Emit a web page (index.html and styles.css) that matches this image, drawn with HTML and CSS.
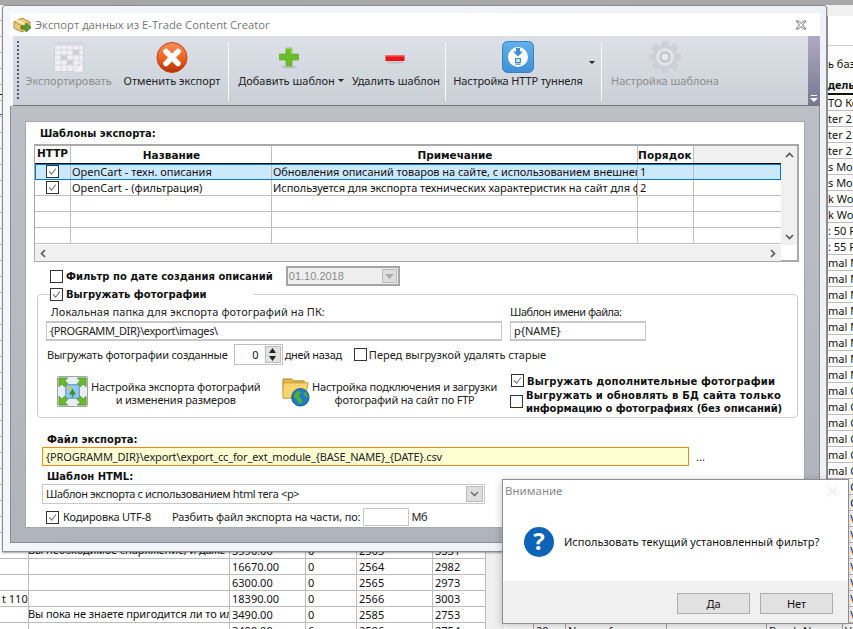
FILE: index.html
```html
<!DOCTYPE html>
<html lang="ru">
<head>
<meta charset="utf-8">
<title>Экспорт данных</title>
<link rel="stylesheet" href="styles.css">
</head>
<body>
<svg class="defs" width="0" height="0" aria-hidden="true">
  <symbol id="check" viewBox="0 0 13 13"><path d="M2.5 6.5l3 3.2 5-6.7" fill="none" stroke="#777" stroke-width="1.3"/></symbol>
  <symbol id="chev" viewBox="0 0 9 6"><path d="M1 1l3.5 3.5L8 1" fill="none" stroke="#666" stroke-width="1.4"/></symbol>
</svg>

<div class="desk-top"></div>

<section class="sheet-left">
  <div class="lrow"><span class="c1"></span><span class="c2">Вы необходимое снаряжение, и даже</span><span class="c3">3590.00</span><span class="c4">0</span><span class="c5">2563</span><span class="c6">3331</span></div>
  <div class="lrow"><span class="c1"></span><span class="c2"></span><span class="c3">16670.00</span><span class="c4">0</span><span class="c5">2564</span><span class="c6">2982</span></div>
  <div class="lrow"><span class="c1"></span><span class="c2"></span><span class="c3">6300.00</span><span class="c4">0</span><span class="c5">2565</span><span class="c6">2973</span></div>
  <div class="lrow"><span class="c1">t 110</span><span class="c2"></span><span class="c3">18390.00</span><span class="c4">0</span><span class="c5">2566</span><span class="c6">3003</span></div>
  <div class="lrow"><span class="c1"></span><span class="c2">Вы пока не знаете пригодится ли то или иное</span><span class="c3">3490.00</span><span class="c4">0</span><span class="c5">2585</span><span class="c6">2753</span></div>
  <div class="lrow"><span class="c1"></span><span class="c2"></span><span class="c3">3490.00</span><span class="c4">6</span><span class="c5">2586</span><span class="c6">2754</span></div>
</section>

<section class="sheet-right">
  <div class="rhead r1"></div>
  <div class="rhead r2">ь баз</div>
  <div class="rhead r3">дель</div>
  <div class="rrow">ТО Ко</div><div class="rrow">ter 2</div><div class="rrow">ter 2</div><div class="rrow">ter 2</div>
  <div class="rrow">s Mor</div><div class="rrow">s Mor</div><div class="rrow">k Wol</div><div class="rrow">k Wol</div>
  <div class="rrow">: 50 P</div><div class="rrow">: 55 P</div>
  <div class="rrow">mal M</div><div class="rrow">mal M</div><div class="rrow">mal M</div><div class="rrow">mal M</div>
  <div class="rrow">mal M</div><div class="rrow">mal M</div><div class="rrow">mal M</div><div class="rrow">mal M</div>
  <div class="rrow">mal C</div><div class="rrow">mal C</div><div class="rrow">mal C</div><div class="rrow">mal C</div>
  <div class="rrow">mal C</div><div class="rrow">mal C</div><div class="rrow">mal C</div><div class="rrow">mal C</div>
  <div class="rrow">mal V</div><div class="rrow">mal V</div><div class="rrow">mal V</div><div class="rrow">mal V</div>
  <div class="rrow">mal V</div><div class="rrow">mal V</div><div class="rrow">mal V</div>
</section>

<section class="sheet-under">
  <span class="u1"></span><span class="u2">20</span><span class="u3">Name of</span><span class="u4"></span><span class="u5">Bosch Name</span><span class="u6">V</span>
</section>

<main class="window">
  <header class="titlebar">
    <svg class="appicon" width="18" height="18" viewBox="0 0 18 18">
      <path d="M1 6l8-4 8 4v6l-8 4-8-4z" fill="#f0c878" stroke="#b08a3c"/>
      <path d="M1 6l8 4 8-4M9 10v6" fill="none" stroke="#c8a050"/>
      <path d="M3 3.800l8 4" stroke="#fff0c8" stroke-width="2"/>
      <path d="M8 10h5V7l5 4.500-5 4.500v-3H8z" fill="#5aa02c" stroke="#2f7a1c" stroke-width=".8"/>
    </svg>
    <span class="titletext">Экспорт данных из E-Trade Content Creator</span>
    <svg class="closex" width="12" height="10" viewBox="0 0 12 10"><path d="M1 1h2.500L6 3.500 8.500 1H11L7.500 5 11 9H8.500L6 6.500 3.500 9H1l3.500-4z" fill="#fff" stroke="#707070"/></svg>
  </header>

  <nav class="toolbar">
    <div class="grip"></div>
    <div class="tool t1 off">
      <svg class="ticon" width="32" height="32" viewBox="0 0 32 32">
        <rect x="1.500" y="1.500" width="29" height="29" rx="1" fill="#f1f1f5" stroke="#d0d0d9"/>
        <rect x="2" y="2" width="28" height="3" fill="#d9d9e1"/>
        <path d="M2 9h28M2 14h28M2 19h28M2 24h28M8 5v25M14 5v25M20 5v25M26 5v25" stroke="#d6d6de" fill="none"/>
        <rect x="20" y="9" width="6" height="5" fill="#cfcfd8"/><rect x="8" y="14" width="6" height="5" fill="#cfcfd8"/><rect x="14" y="19" width="6" height="5" fill="#cfcfd8"/>
        <path d="M20 31l10-10v10z" fill="#f6f6f8" stroke="#d4d4db"/>
      </svg>
      <span class="tlabel">Экспортировать</span>
    </div>
    <div class="tool t2">
      <svg class="ticon" width="32" height="32" viewBox="0 0 32 32">
        <defs><linearGradient id="og" x1="0" y1="0" x2="0" y2="1"><stop offset="0" stop-color="#f8925a"/><stop offset=".55" stop-color="#ee5f1c"/><stop offset="1" stop-color="#b42c08"/></linearGradient></defs>
        <circle cx="16" cy="16.500" r="15" fill="url(#og)" stroke="#c24212"/>
        <path d="M10 10.500l12 12M22 10.500l-12 12" stroke="#fff" stroke-width="5.500" stroke-linecap="round"/>
      </svg>
      <span class="tlabel">Отменить экспорт</span>
    </div>
    <div class="tsep"></div>
    <div class="tool t3">
      <svg class="ticon" width="32" height="32" viewBox="0 0 32 32">
        <ellipse cx="16" cy="26" rx="8" ry="1.300" fill="#b9bcc2"/>
        <path d="M13 7h6v6h6.500v6H19v6h-6v-6H6.500v-6H13z" fill="#6cbc2a" stroke="#5aa51e" stroke-width=".6"/>
        <path d="M13.500 7.500h5v6" fill="none" stroke="#9ede5c"/>
      </svg>
      <span class="tlabel">Добавить шаблон<i class="caret"></i></span>
    </div>
    <div class="tool t4">
      <svg class="ticon" width="32" height="32" viewBox="0 0 32 32">
        <ellipse cx="16" cy="21.500" rx="9" ry="1" fill="#bfc2c8"/>
        <rect x="6.500" y="14" width="19" height="6" rx=".5" fill="#e81416"/>
        <rect x="7" y="14" width="18" height="1.500" fill="#f76a6a"/>
      </svg>
      <span class="tlabel">Удалить шаблон</span>
    </div>
    <div class="tsep s2"></div>
    <div class="tool t5">
      <svg class="ticon" width="32" height="32" viewBox="0 0 32 32">
        <defs><linearGradient id="bg" x1="0" y1="0" x2="0" y2="1"><stop offset="0" stop-color="#5fb2ea"/><stop offset="1" stop-color="#3f8fd6"/></linearGradient></defs>
        <rect x=".5" y=".5" width="31" height="31" rx="5" fill="url(#bg)" stroke="#3a7fc0"/>
        <circle cx="16" cy="16" r="10" fill="#fff"/>
        <path d="M14 7h4v3.500h3l-5 5-5-5h3z" fill="#3f8fd6"/>
        <rect x="13" y="17" width="6" height="5" fill="#3f8fd6"/><rect x="14.200" y="18.200" width="3.600" height="2.600" fill="#dff0fb"/>
        <rect x="13.500" y="22.500" width="5" height="1.300" fill="#3f8fd6"/>
      </svg>
      <span class="tlabel">Настройка HTTP туннеля</span>
      <i class="caret far"></i>
    </div>
    <div class="tsep s3"></div>
    <div class="tool t6 off">
      <svg class="ticon" width="32" height="32" viewBox="0 0 32 32">
        <g fill="#cfcfda">
          <rect x="12.500" y="0" width="7" height="6"/>
          <rect x="12.500" y="0" width="7" height="6" transform="rotate(45 16 16)"/>
          <rect x="12.500" y="0" width="7" height="6" transform="rotate(90 16 16)"/>
          <rect x="12.500" y="0" width="7" height="6" transform="rotate(135 16 16)"/>
          <rect x="12.500" y="0" width="7" height="6" transform="rotate(180 16 16)"/>
          <rect x="12.500" y="0" width="7" height="6" transform="rotate(225 16 16)"/>
          <rect x="12.500" y="0" width="7" height="6" transform="rotate(270 16 16)"/>
          <rect x="12.500" y="0" width="7" height="6" transform="rotate(315 16 16)"/>
          <circle cx="16" cy="16" r="12.500"/>
        </g>
        <circle cx="16" cy="16" r="9" fill="#e2e2e9"/>
        <circle cx="16" cy="16" r="4.500" fill="#e9e9ee" stroke="#bdbdca" stroke-width="2"/>
      </svg>
      <span class="tlabel">Настройка шаблона</span>
    </div>
    <div class="overflow">
      <svg width="8" height="7" viewBox="0 0 8 7"><path d="M1 .5h6" stroke="#fff"/><path d="M0 3h8L4 7z" fill="#fff"/></svg>
    </div>
  </nav>

  <div class="stage">
    <div class="panel">
      <div class="blabel head">Шаблоны экспорта:</div>

      <div class="gridbox">
        <div class="gridtop">
          <div class="gridmain">
            <div class="grow ghead">
              <span class="g1 th up">HTTP</span><span class="g2 th ctr">Название</span><span class="g3 th ctr">Примечание</span><span class="g4 th">Порядок</span><span class="g5 blank"></span>
            </div>
            <div class="grow sel">
              <span class="g1"><span class="cb"><svg><use href="#check"/></svg></span></span><span class="g2">OpenCart - техн. описания</span><span class="g3">Обновления описаний товаров на сайте, с использованием внешнего модуля</span><span class="g4">1</span><span class="g5"></span>
            </div>
            <div class="grow">
              <span class="g1"><span class="cb"><svg><use href="#check"/></svg></span></span><span class="g2">OpenCart - (фильтрация)</span><span class="g3">Используется для экспорта технических характеристик на сайт для фильтрации</span><span class="g4">2</span><span class="g5"></span>
            </div>
            <div class="grow"><span class="g1"></span><span class="g2"></span><span class="g3"></span><span class="g4"></span><span class="g5"></span></div>
            <div class="grow"><span class="g1"></span><span class="g2"></span><span class="g3"></span><span class="g4"></span><span class="g5"></span></div>
            <div class="grow"><span class="g1"></span><span class="g2"></span><span class="g3"></span><span class="g4"></span><span class="g5"></span></div>
          </div>
          <div class="vscroll">
            <svg width="9" height="6" viewBox="0 0 9 6"><path d="M1 5l3.500-3.500L8 5" fill="none" stroke="#555" stroke-width="1.600"/></svg>
            <svg width="9" height="6" viewBox="0 0 9 6"><path d="M1 1l3.500 3.500L8 1" fill="none" stroke="#555" stroke-width="1.600"/></svg>
          </div>
        </div>
        <div class="hscroll">
          <svg width="6" height="9" viewBox="0 0 6 9"><path d="M5 1L1.500 4.500 5 8" fill="none" stroke="#555" stroke-width="1.600"/></svg>
          <svg width="6" height="9" viewBox="0 0 6 9"><path d="M1 1l3.500 3.500L1 8" fill="none" stroke="#555" stroke-width="1.600"/></svg>
        </div>
      </div>

      <div class="filter">
        <span class="cb"></span>
        <span class="blabel">Фильтр по дате создания описаний</span>
        <div class="datebox"><span>01.10.2018</span><span class="datebtn"><svg width="9" height="5" viewBox="0 0 9 5"><path d="M0 0h9L4.500 5z" fill="#aaa"/></svg></span></div>
      </div>

      <fieldset class="group">
        <legend class="legend"><span class="cb"><svg><use href="#check"/></svg></span><span class="blabel">Выгружать фотографии</span></legend>
        <div class="pathrow">
          <div class="field wide">
            <label class="lbl loose">Локальная папка для экспорта фотографий на ПК:</label>
            <div class="input pathtext">{PROGRAMM_DIR}\export\images\</div>
          </div>
          <div class="field name">
            <label class="lbl tight">Шаблон имени файла:</label>
            <div class="input">p{NAME}</div>
          </div>
        </div>
        <div class="spinrow">
          <span class="lbl snug">Выгружать фотографии созданные</span>
          <div class="spin"><span class="spinval">0</span><span class="spinbtns"><svg width="7" height="5" viewBox="0 0 7 5"><path d="M3.500 0L7 5H0z" fill="#222"/></svg><svg width="7" height="5" viewBox="0 0 7 5"><path d="M0 0h7L3.500 5z" fill="#222"/></svg></span></div>
          <span class="lbl days">дней назад</span>
          <span class="cb old"></span>
          <span class="lbl">Перед выгрузкой удалять старые</span>
        </div>
        <div class="actions">
          <div class="action a1">
            <svg width="31" height="31" viewBox="0 0 32 32">
              <rect x=".5" y=".5" width="31" height="31" rx="1.500" fill="#e9eef2" stroke="#9aa0a6"/>
              <rect x="9" y="9" width="14" height="14" fill="#8fc8ee" stroke="#5a90c0"/>
              <circle cx="12.500" cy="12.500" r="1.800" fill="#f4c020"/>
              <path d="M16 13l3.500 6h-7zM15.200 19h1.600v3h-1.600z" fill="#3e8a2c"/>
              <path d="M2 2h9l-2.800 2.800 3 3-3.400 3.400-3-3L2 11zM30 2h-9l2.800 2.800-3 3 3.400 3.400 3-3L30 11zM2 30h9l-2.800-2.800 3-3-3.400-3.400-3 3L2 21zM30 30h-9l2.800-2.800-3-3 3.400-3.400 3 3L30 21z" fill="#6cb82c" stroke="#3f8a18" stroke-width=".7"/>
            </svg>
            <span class="actiontext">Настройка экспорта фотографий<br>и изменения размеров</span>
          </div>
          <div class="action a2">
            <svg width="29" height="31" viewBox="0 0 30 32">
              <path d="M1 3h9l2 2h11v8H1z" fill="#e8b84a" stroke="#b48a28"/>
              <path d="M1 9l2-2h24l-3 16H1z" fill="#f7d470" stroke="#c09a38"/>
              <circle cx="19" cy="22" r="9" fill="#1f78c8" stroke="#145a9c"/>
              <path d="M13 18c3-3 5-3 6-1s-2 3-1 5 3 1 3 4-3 3-4 2-1-4-3-5-2-3-1-5zM23 16c2 1 4 4 4 6-2 0-3-1-4-2s-1-3 0-4z" fill="#4cb034"/>
            </svg>
            <span class="actiontext">Настройка подключения и загрузки<br>фотографий на сайт по FTP</span>
          </div>
          <div class="optcol">
            <div class="opt o1"><span class="cb"><svg><use href="#check"/></svg></span><span class="blabel">Выгружать дополнительные фотографии</span></div>
            <div class="opt o2"><span class="cb"></span><span class="blabel"><span class="l1">Выгружать и обновлять в БД сайта только</span><br><span class="l2">информацию о фотографиях (без описаний)</span></span></div>
          </div>
        </div>
      </fieldset>

      <div class="filesec">
        <div class="blabel sub">Файл экспорта:</div>
        <div class="filerow"><div class="input hot">{PROGRAMM_DIR}\export\export_cc_for_ext_module_{BASE_NAME}_{DATE}.csv</div><span class="dots">...</span></div>
        <div class="blabel sub s2nd">Шаблон HTML:</div>
        <div class="select"><span>Шаблон экспорта с использованием html тега &lt;p&gt;</span><span class="selbtn"><svg width="9" height="6"><use href="#chev"/></svg></span></div>
        <div class="lastrow">
          <span class="cb"><svg><use href="#check"/></svg></span>
          <span class="lbl utf">Кодировка UTF-8</span>
          <span class="lbl split">Разбить файл экспорта на части, по:</span>
          <div class="input tiny"></div>
          <span class="lbl mb">Мб</span>
        </div>
      </div>
    </div>
  </div>
</main>

<aside class="dialog">
  <header class="dlgtitle"><span>Внимание</span>
    <svg width="11" height="11" viewBox="0 0 11 11"><path d="M.5.500l10 10M10.500.500l-10 10" stroke="#e4e4e4"/></svg>
  </header>
  <div class="dlgbody">
    <svg width="30" height="30" viewBox="0 0 30 30"><circle cx="15" cy="15" r="15" fill="#0b64b8"/><text x="15" y="23" text-anchor="middle" class="qmark">?</text></svg>
    <span class="dlgtext">Использовать текущий установленный фильтр?</span>
  </div>
  <footer class="dlgfoot"><button class="btn">Да</button><button class="btn">Нет</button></footer>
</aside>
</body>
</html>
```

FILE: styles.css
```css
* { box-sizing: border-box; }
html, body { margin: 0; padding: 0; }
body {
  width: 853px; height: 629px; overflow: hidden; position: relative;
  background: #f0f0f0; color: #111;
  font: 11px/14px "Noto Sans", sans-serif;
}
.defs { position: absolute; }
.desk-top { position: absolute; left: 0; top: 0; width: 853px; height: 16px;
  background: linear-gradient(#a8a8a8 0 5px, #f0f0f0 5px); }

/* background sheets */
.sheet-left { position: absolute; left: 0; top: 5px; width: 486px; height: 624px; padding-top: 538px;
  background: repeating-linear-gradient(#fff 0 15px, #bdbdbd 15px 16px); }
.sheet-left::before { content: ""; position: absolute; left: 0; top: 89px; width: 3px; height: 1px; background: #111; box-shadow: 0 20px 0 #0078d7; }
.lrow { display: flex; height: 16px; border-bottom: 1px solid #bdbdbd; background: #fff; line-height: 14px; white-space: nowrap; }
.lrow span { display: block; overflow: hidden; border-right: 1px solid #bdbdbd; padding: 1px 0 0 2px; }
.c1 { width: 29px; text-align: right; padding-right: 3px !important; }
.c2 { width: 201px; padding: 0 !important; letter-spacing: -.1px; text-indent: -1px; }
.c3 { width: 76px; }
.c4 { width: 51px; }
.c5 { width: 76px; }
.c6 { width: 53px; }

.sheet-right { position: absolute; left: 827px; top: 16px; width: 26px; height: 613px; background: #fff; border-left: 1px solid #999; overflow: hidden; white-space: nowrap; }
.rhead { line-height: 16px; }
.r1 { height: 30px; border-bottom: 1px solid #cfcfcf; }
.r2 { height: 28px; padding-top: 10px; }
.r3 { height: 21px; padding-top: 3px; border-bottom: 2px solid #111; font-weight: 700; }
.rrow { height: 16px; line-height: 14px; padding-top: 1px; border-bottom: 1px solid #bdbdbd; }
.sheet-under { position: absolute; left: 504px; top: 623px; width: 349px; height: 6px; display: flex; background: #fff; border-top: 1px solid #999; line-height: 14px; overflow: hidden; }
.sheet-under span { display: block; border-right: 1px solid #aaa; padding-left: 2px; overflow: hidden; white-space: nowrap; }
.u1 { width: 30px; } .u2 { width: 32px; } .u3 { width: 101px; } .u4 { width: 100px; } .u5 { width: 76px; } .u6 { flex: 1; border: 0 !important; }

/* main window */
.window { position: absolute; left: 2px; top: 5px; width: 825px; height: 547px; padding: 7px 6px 8px 7px;
  background: linear-gradient(90deg, #f4f6fb, #eef1f6); border: 1px solid #8c8c8c; border-radius: 3px 3px 0 0;
  box-shadow: 0 1px 2px rgba(0,0,0,.35); display: flex; flex-direction: column; }
.titlebar { height: 23px; background: #fff; display: flex; align-items: center; padding: 0 13px 0 3px; flex: none; }
.appicon { flex: none; }
.titletext { margin-left: 4px; font: 11.25px/16px "Open Sans", sans-serif; color: #777; flex: 1; }
.toolbar { height: 70px; flex: none; margin-left: 3px; display: flex; position: relative;
  background: linear-gradient(#dde0e7, #cbd0d8); border-bottom: 1px solid #70747c; padding-left: 3px; }
.grip { width: 2px; margin: 5px 0 5px 1px; flex: none;
  background: repeating-linear-gradient(#55557f 0 2px, transparent 2px 4px); }
.tool { flex: none; display: flex; flex-direction: column; align-items: center; padding-top: 5px; position: relative; white-space: nowrap; }
.ticon { flex: none; }
.tlabel { margin-top: 0; line-height: 16px; color: #222; }
.off .tlabel { color: #8d8d8d; }
.t1 { width: 97px; margin-left: 1px; }
.t2 { width: 110px; }
.t3 { width: 114px; margin-left: 3px; }
.t3 .tlabel { margin-left: 4px; }
.t4 { width: 99px; margin-left: -1px; }
.t4 .tlabel { margin-left: 3px; }
.t5 { width: 140px; margin-left: 2px; }
.t5 .tlabel { letter-spacing: -.15px; }
.t6 { width: 120px; margin-left: 3px; }
.tsep { width: 1px; margin: 7px 0 4px 1px; background: #f8f9fb; flex: none; }
.s3 { margin-left: 13px; }
.caret { display: inline-block; width: 0; height: 0; margin-left: 3px; vertical-align: 3px; border: 3px solid transparent; border-top: 3px solid #222; border-bottom: 0; }
.far { position: absolute; right: -7px; top: 25px; }
.overflow { position: absolute; right: 0; top: 0; bottom: 0; width: 12px; display: flex; align-items: flex-end; justify-content: center; padding-bottom: 3px;
  background: linear-gradient(#aeaac4, #79768f); }

.stage { flex: 1; background: linear-gradient(#bcc0c6, #afb3bb); border: 1px solid #8b8d91; border-top: 0; padding: 15px 15px 14px 14px; }
.panel { height: 407px; width: 780px; background: #fff; border: 1px solid #a8a8a8; }

.blabel { font: 700 10px/13px "DejaVu Sans", sans-serif; color: #111; white-space: nowrap; }
.lbl { white-space: nowrap; display: block; color: #222; }
.head { padding: 5px 0 0 14px; height: 22px; }

.cb { display: inline-block; width: 13px; height: 13px; border: 1px solid #333; background: #fff; flex: none; }
.cb svg { display: block; width: 11px; height: 11px; }

/* template grid */
.gridbox { margin-left: 8px; width: 765px; height: 118px; border: 1px solid #a9a9a9; border-width: 2px 2px 2px 1px; }
.gridtop { display: flex; height: 99px; }
.gridmain { width: 746px; }
.grow { display: flex; height: 16px; border-bottom: 1px solid #bfbfbf; line-height: 15px; white-space: nowrap; }
.grow > span { display: flex; align-items: center; overflow: hidden; border-right: 1px solid #bfbfbf; padding-left: 1px; }
.g1 { width: 36px; justify-content: center; padding-left: 0 !important; }
.g2 { width: 201px; }
.g3 { width: 366px; letter-spacing: -.05px; }
.g4 { width: 56px; }
.g5 { width: 87px; border-right: 0 !important; }
.g4:not(.th) { padding-left: 2px !important; }
.ghead { height: 18px; border-bottom: 1px solid #111; }
.th { font: 700 10.5px/14px "DejaVu Sans", sans-serif; }
.g4.th { padding-left: 0; letter-spacing: .1px; }
.ctr { justify-content: center; }
.up { align-items: flex-start !important; }
.blank { background: #f0f0f0; }
.sel { background: #cce8fb; outline: 1px solid #0078d7; outline-offset: -1px; }
.vscroll { width: 17px; height: 99px; background: #f0f0f0; display: flex; flex-direction: column; justify-content: space-between; align-items: center; padding: 6px 0 5px; }
.vscroll svg, .hscroll svg { display: block; }
.hscroll { width: 746px; height: 16px; background: #f0f0f0; display: flex; justify-content: space-between; align-items: center; padding: 0 5px; }

.filter { display: flex; align-items: center; height: 20px; margin: 4px 0 0 24px; }
.filter .blabel { margin-left: 3px; }
.datebox { margin-left: 13px; width: 114px; height: 20px; border: 2px solid #a6a6a6; background: #efefef; color: #8a8a8a; display: flex; justify-content: space-between; align-items: center; padding: 0 0 0 1px; font: 11px "Liberation Sans", sans-serif; }
.datebtn { width: 15px; height: 14px; margin-right: 1px; background: #dedede; border: 1px solid #bbb; display: flex; align-items: center; justify-content: center; }

.group { margin: 1px 0 0 11px; width: 761px; height: 131px; border: 1px solid #cdcdcd; border-radius: 4px; padding: 0 0 0 8px; min-width: 0; position: relative; }
.legend { display: flex; align-items: center; padding: 0 47px 0 0; margin-left: 4px; height: 14px; background: #fff; }
.legend .blabel { margin-left: 3px; }
.pathrow { display: flex; margin-top: 2px; }
.field .lbl { padding-left: 5px; height: 18px; line-height: 18px; }
.wide { width: 464px; }
.wide .input { width: 456px; }
.name { width: 136px; }
.field.name .lbl { padding-left: 0; }
.loose { letter-spacing: .1px; }
.tight { letter-spacing: -.5px; }
.pathtext { letter-spacing: -.4px; }
.snug { letter-spacing: -.2px; }
.days { letter-spacing: -.3px; }
.input { height: 20px; border: 1px solid #c8c8c8; border-width: 2px 1px; background: #fff; padding-left: 3px; line-height: 16px; color: #222; white-space: nowrap; overflow: hidden; }
.spinrow { display: flex; align-items: center; height: 21px; margin-top: 3px; padding-left: 1px; }
.spin { width: 49px; height: 21px; margin: 0 2px 0 6px; border: 1px solid #c0c0c0; display: flex; align-items: center; justify-content: flex-end; }
.spinval { margin-right: 6px; }
.spinbtns { width: 16px; height: 17px; margin-right: 1px; background: #e2e2e2; border: 1px solid #bcbcbc; display: flex; flex-direction: column; justify-content: space-around; align-items: center; }
.spinbtns svg { display: block; }
.old { margin: 0 2px 0 12px; }
.actions { display: flex; margin-top: 11px; position: relative; }
.action { display: flex; align-items: center; flex: none; height: 31px; }
.action svg { flex: none; }
.actiontext { text-align: center; line-height: 13px; padding-top: 2px; color: #222; white-space: nowrap; letter-spacing: -.2px; }
.a1 { width: 236px; padding-left: 11px; }
.a1 .actiontext { margin-left: 3px; }
.a2 { width: 229px; }
.a2 .actiontext { margin-left: 1px; }
.optcol { margin-top: -2px; }
.opt { display: flex; align-items: center; }
.opt .blabel { margin-left: 3px; }
.o1 { height: 15px; }
.o1 .cb { margin-top: -2px; }
.o1 .blabel { letter-spacing: .15px; }
.o2 { height: 26px; margin-left: -1px; }
.o2 .cb { margin-top: -2px; }
.l1 { letter-spacing: .2px; }
.l2 { letter-spacing: -.08px; }

.filesec { padding: 14px 0 0 16px; }
.filerow { display: flex; align-items: center; margin-top: 1px; }
.sub { padding: 1px 0 0 5px; height: 14px; }
.hot { width: 647px; height: 19px; border: 1px solid #f08a12; background: #ffffd4; line-height: 17px; letter-spacing: -.15px; }
.dots { margin-left: 7px; }
.s2nd { margin-top: 3px; }
.select { margin-top: 1px; width: 443px; height: 20px; border: 1px solid #c8c8c8; display: flex; justify-content: space-between; align-items: center; padding: 0 1px 0 3px; color: #222; letter-spacing: -.35px; }
.selbtn { width: 17px; height: 16px; background: #dedede; border: 1px solid #bbb; display: flex; align-items: center; justify-content: center; }
.lastrow { display: flex; align-items: center; height: 20px; margin-top: 3px; padding-left: 4px; }
.utf { margin-left: 4px; letter-spacing: -.15px; }
.split { margin-left: 21px; letter-spacing: -.15px; }
.tiny { width: 46px; height: 18px; margin: 0 2px 0 3px; border-width: 1px; }
.mb { letter-spacing: -.4px; }

/* dialog */
.dialog { position: absolute; left: 502px; top: 479px; width: 347px; height: 145px; background: #fff; border: 1px solid #8f8f8f; box-shadow: 0 2px 8px rgba(0,0,0,.25); display: flex; flex-direction: column; font: 11px/16px "Noto Sans", sans-serif; }
.dlgtitle { height: 22px; display: flex; justify-content: space-between; align-items: center; padding: 0 10px 0 2px; color: #8a8a8a; flex: none; font-size: 11.5px; }
.dlgbody { flex: 1; display: flex; align-items: center; padding-left: 21px; padding-top: 1px; }
.dlgtext { margin-left: 10px; color: #111; }
.qmark { font: 700 24px "Open Sans", sans-serif; fill: #fff; }
.dlgfoot { height: 42px; flex: none; background: #f0f0f0; display: flex; justify-content: flex-end; gap: 10px; padding: 12px 15px 0 0; }
.btn { width: 73px; height: 21px; padding: 0; background: #e1e1e1; border: 1px solid #adadad; font: 11px/16px "Noto Sans", sans-serif; color: #111; }
```
